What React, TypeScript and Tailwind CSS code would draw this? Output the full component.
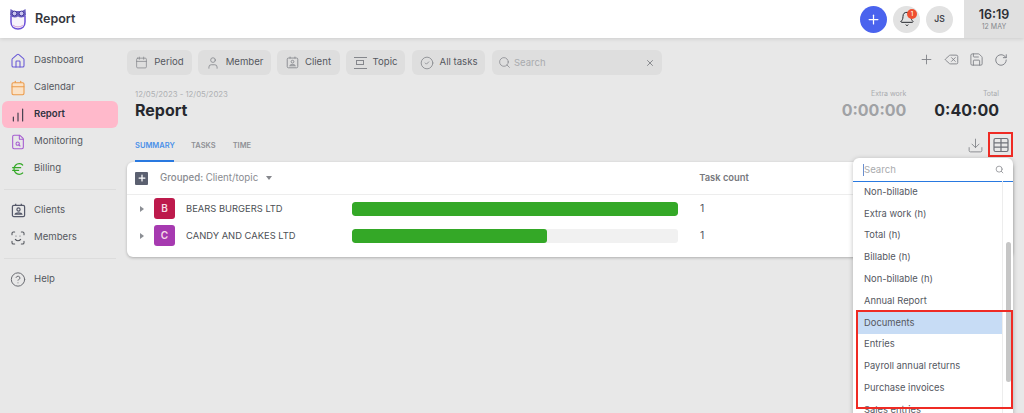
import {
  Calendar,
  ChartNoAxesColumnIncreasing,
  CircleCheck,
  CircleHelp,
  Delete,
  Download,
  Euro,
  FileSearch,
  House,
  Plus,
  RotateCw,
  Save,
  ScanFace,
  Search,
  Bell,
  User,
  X,
} from "lucide-react";

function Owl() {
  return (
    <svg width="18" height="22" viewBox="0 0 18 22" fill="none">
      <path d="M2 8 L2 14 C2 18.5 5 21 9 21 C13 21 16 18.5 16 14 L16 8" fill="#f7f3fb" stroke="#6b4fd8" strokeWidth="1.5" />
      <path d="M4 17 C6 19.5 12 19.5 14 17" stroke="#d9a8d8" strokeWidth="1.2" />
      <path d="M1.5 1 L5 3 H13 L16.5 1 L17 7 C15 10 11 10 9 8.5 C7 10 3 10 1 7 Z" fill="#6b5fc0" />
      <circle cx="5.5" cy="5.5" r="2.4" fill="#c9c4ee" stroke="#44399c" />
      <circle cx="12.5" cy="5.5" r="2.4" fill="#c9c4ee" stroke="#44399c" />
    </svg>
  );
}

function ClientIcon({ size, color, strokeWidth }: { size: number; color: string; strokeWidth: number }) {
  return (
    <svg width={size} height={size} viewBox="0 0 16 16" fill="none" stroke={color} strokeWidth={strokeWidth}>
      <rect x="1.5" y="2.5" width="13" height="12" rx="1.5" />
      <path d="M5 0.8 V3 M11 0.8 V3" />
      <circle cx="8" cy="7" r="1.7" />
      <path d="M4.5 12 C5 10 11 10 11.5 12 Z" />
    </svg>
  );
}

function TableIcon() {
  return (
    <svg width="16" height="16" viewBox="0 0 16 16" fill="none" stroke="#6e7178" strokeWidth="1.2">
      <rect x="1" y="1.5" width="14" height="13" rx="1.5" />
      <path d="M1 5.8 H15 M1 10.2 H15 M8 1.5 V14.5" />
    </svg>
  );
}

function NavItem({ icon, label, active }: { icon: React.ReactNode; label: string; active?: boolean }) {
  return (
    <div className={"mx-[2px] flex h-[27px] items-center gap-[8px] rounded-md pl-[8px] text-[9.6px] " + (active ? "bg-[#ffb9cb] font-semibold text-[#2f3240]" : "text-[#55585f]")}>
      <span className="flex w-[16px] justify-center">{icon}</span>
      {label}
    </div>
  );
}

function Filter({ icon, label, width }: { icon: React.ReactNode; label: string; width: string }) {
  return (
    <div className={"flex h-[25px] items-center justify-center gap-[6px] rounded-md bg-[#dedede] text-[9.6px] text-[#55585f] " + width}>
      {icon}
      {label}
    </div>
  );
}

function Row({ letter, color, name, bar }: { letter: string; color: string; name: string; bar: string }) {
  return (
    <div className="flex h-[27px] items-center">
      <span className="ml-[13px] h-0 w-0 border-y-[3.5px] border-l-[4px] border-y-transparent border-l-[#8b8e94]" />
      <span className={"ml-[10px] flex h-[21px] w-[21px] items-center justify-center rounded-[3px] text-[10px] font-semibold text-[#f6dbe6] " + color}>{letter}</span>
      <span className="ml-[11px] w-[166px] pt-[1px] text-[9.4px] text-[#4c4f55]">{name}</span>
      <div className="h-[14px] w-[326px] overflow-hidden rounded-[3px] bg-[#f1f1f1]">
        <div className={"h-full rounded-[3px] bg-[#34a827] " + bar} />
      </div>
      <span className="ml-[22px] text-[10.5px] text-[#55585f]">1</span>
    </div>
  );
}

const columns = ["Non-billable", "Extra work (h)", "Total (h)", "Billable (h)", "Non-billable (h)", "Annual Report", "Documents", "Entries", "Payroll annual returns", "Purchase invoices", "Sales entries"];

export default function App() {
  return (
    <div className="relative flex h-[413px] w-[1024px] flex-col overflow-hidden bg-[#e8e8e8] font-['Inter',sans-serif]">
      {/* Top bar */}
      <header className="flex h-[38px] shrink-0 items-center bg-white shadow-[0_1px_4px_rgba(0,0,0,0.12)]">
        <div className="ml-[9px]"><Owl /></div>
        <span className="ml-[8px] text-[12.5px] font-semibold text-[#34363c]">Report</span>
        <div className="ml-auto flex items-center gap-[6px]">
          <span className="flex h-[27px] w-[27px] items-center justify-center rounded-full bg-[#4a63ee]">
            <Plus size={15} color="white" strokeWidth={2} />
          </span>
          <span className="relative flex h-[27px] w-[27px] items-center justify-center rounded-full bg-[#e2e2e2]">
            <Bell size={16} color="#26282e" strokeWidth={1.5} />
            <span className="absolute right-[3px] top-[3px] flex h-[10px] w-[10px] items-center justify-center rounded-full bg-[#ef4f30] text-[6px] font-medium text-white">1</span>
          </span>
          <span className="flex h-[27px] w-[27px] items-center justify-center rounded-full bg-[#e2e2e2] text-[8.5px] font-semibold text-[#44464c]">JS</span>
        </div>
        <div className="ml-[11px] flex h-full w-[60px] flex-col items-center justify-center bg-[#e0e0e0]">
          <span className="text-[12.5px] font-semibold leading-[15px] text-[#2d2f36]">16:19</span>
          <span className="text-[7px] leading-[10px] text-[#85878c]">12 MAY</span>
        </div>
      </header>

      <div className="flex min-h-0 flex-1">
        {/* Sidebar */}
        <aside className="w-[120px] shrink-0 pt-[9px]">
          <NavItem icon={<House size={16} color="#6a5ad6" strokeWidth={1.6} />} label="Dashboard" />
          <NavItem icon={<Calendar size={16} color="#ec9a4a" fill="#fbe2c6" strokeWidth={1.6} />} label="Calendar" />
          <NavItem active icon={<ChartNoAxesColumnIncreasing size={16} color="#2f3240" strokeWidth={1.6} />} label="Report" />
          <NavItem icon={<FileSearch size={16} color="#a55cd0" strokeWidth={1.6} />} label="Monitoring" />
          <NavItem icon={<Euro size={16} color="#34a827" strokeWidth={1.8} />} label="Billing" />
          <div className="mx-[4px] my-[7px] h-px bg-[#dcdcdc]" />
          <NavItem icon={<ClientIcon size={15} color="#55596a" strokeWidth={1.3} />} label="Clients" />
          <NavItem icon={<ScanFace size={16} color="#55585f" strokeWidth={1.6} />} label="Members" />
          <div className="mx-[4px] my-[7px] h-px bg-[#dcdcdc]" />
          <NavItem icon={<CircleHelp size={17} color="#6a6c72" strokeWidth={1.5} />} label="Help" />
        </aside>

        {/* Main */}
        <main className="min-w-0 flex-1 pl-[7px] pr-[11px] pt-[12px]">
          <div className="flex items-center gap-[6px]">
            <Filter width="w-[65px]" icon={<Calendar size={13} color="#85878c" strokeWidth={1.4} />} label="Period" />
            <Filter width="w-[73px]" icon={<User size={14} color="#85878c" strokeWidth={1.4} />} label="Member" />
            <Filter width="w-[63px]" icon={<ClientIcon size={13} color="#85878c" strokeWidth={1.1} />} label="Client" />
            <Filter width="w-[59px]" icon={<span className="flex h-[12px] w-[13px] items-center justify-center border-y border-[#85878c]"><span className="h-[5px] w-[8px] border border-[#85878c]" /></span>} label="Topic" />
            <Filter width="ml-[1px] w-[73px]" icon={<CircleCheck size={14} color="#85878c" strokeWidth={1.4} />} label="All tasks" />
            <div className="ml-[1px] flex h-[25px] w-[170px] items-center rounded-md bg-[#dedede] pl-[6px] pr-[7px]">
              <Search size={13} color="#85878c" strokeWidth={1.4} />
              <span className="ml-[3px] pt-[1px] text-[9.5px] text-[#a9abae]">Search</span>
              <X size={10} color="#77797e" className="ml-auto" />
            </div>
            <div className="mb-[6px] ml-auto flex items-center gap-[10px] pr-[5px] text-[#7d7f85]">
              <Plus size={15} strokeWidth={1.4} />
              <Delete size={15} strokeWidth={1.4} />
              <Save size={15} strokeWidth={1.4} />
              <RotateCw size={14} strokeWidth={1.6} />
            </div>
          </div>

          <div className="mt-[14px] flex items-start justify-between pl-[8px]">
            <div>
              <div className="text-[7.8px] leading-[11px] text-[#aeb0b3]">12/05/2023 - 12/05/2023</div>
              <div className="text-[16px] font-bold leading-[20px] text-[#26282e]">Report</div>
            </div>
            <div className="flex gap-[28px] pr-[14px]">
              <div className="flex flex-col items-end">
                <span className="text-[7px] leading-[10px] text-[#a9abae]">Extra work</span>
                <span className="text-[16px] font-bold leading-[22px] text-[#a0a2a5]">0:00:00</span>
              </div>
              <div className="flex flex-col items-end">
                <span className="text-[7px] leading-[10px] text-[#a9abae]">Total</span>
                <span className="text-[16px] font-bold leading-[22px] text-[#26282e]">0:40:00</span>
              </div>
            </div>
          </div>

          <div className="mt-[13px] flex h-[28px] items-start pl-[8px] text-[7.5px] font-semibold text-[#8e9095]">
            <div className="w-[39px] border-b-[2px] border-[#2979e0] pb-[9px] pt-[6px] text-[#4a90e8]">SUMMARY</div>
            <div className="ml-[17px] pt-[6px]">TASKS</div>
            <div className="ml-[17px] pt-[6px]">TIME</div>
            <div className="ml-auto -mt-[2px] flex items-start gap-[4px]">
              <span className="mt-[5px]"><Download size={17} color="#85878c" strokeWidth={1.3} /></span>
              <span className="flex h-[25px] w-[25px] items-center justify-center border-[2px] border-[#ef2b24]">
                <TableIcon />
              </span>
            </div>
          </div>

          <section className="rounded-md bg-white pb-[8px] shadow-[0_1px_3px_rgba(0,0,0,0.25)]">
            <div className="flex h-[33px] items-center border-b border-[#ededed]">
              <span className="ml-[8px] flex h-[13px] w-[13px] items-center justify-center rounded-[1px] bg-[#5b6070]">
                <Plus size={10} color="white" strokeWidth={3} />
              </span>
              <span className="ml-[12px] text-[9.7px] font-medium text-[#8a8c91]">Grouped: <span className="font-normal">Client/topic</span></span>
              <span className="ml-[8px] h-0 w-0 border-x-[3.5px] border-t-[4px] border-x-transparent border-t-[#85878c]" />
              <span className="ml-[427px] text-[9.4px] font-semibold text-[#77797e]">Task count</span>
            </div>
            <Row letter="B" color="bg-[#bd1a4c]" name="BEARS BURGERS LTD" bar="w-full" />
            <Row letter="C" color="bg-[#a63ab0]" name="CANDY AND CAKES LTD" bar="w-[195px]" />
          </section>
        </main>
      </div>

      {/* Column picker dropdown */}
      <div className="absolute left-[853px] top-[158px] h-[260px] w-[160px] overflow-hidden rounded-t-md bg-white shadow-[0_1px_5px_rgba(0,0,0,0.25)]">
        <div className="flex h-[24px] items-center border-b border-[#2979e0] pl-[10px] pr-[9px]">
          <span className="h-[12px] w-px bg-[#6a8fd0]" />
          <span className="pt-[1px] text-[9.6px] text-[#a9abae]">Search</span>
          <Search size={9} color="#85878c" className="ml-auto" />
        </div>
        <div className="-mt-px flex">
          <div className="w-[149px]">
            {columns.map((name) => (
              <div key={name} className={"ml-[5px] flex h-[21.8px] items-center pl-[6px] text-[9.4px] text-[#55585f] " + (name === "Documents" ? "bg-[#c7dcf5]" : "")}>{name}</div>
            ))}
          </div>
          <div className="flex w-[11px] justify-center border-l border-[#ededed] pl-[1px] pt-[61px]">
            <span className="h-[140px] w-[5px] rounded-full bg-[#c6c6c6]" />
          </div>
        </div>
        <div className="absolute left-[3px] top-[152px] h-[99px] w-[157px] border-[2px] border-[#ef2b24]" />
      </div>
    </div>
  );
}
